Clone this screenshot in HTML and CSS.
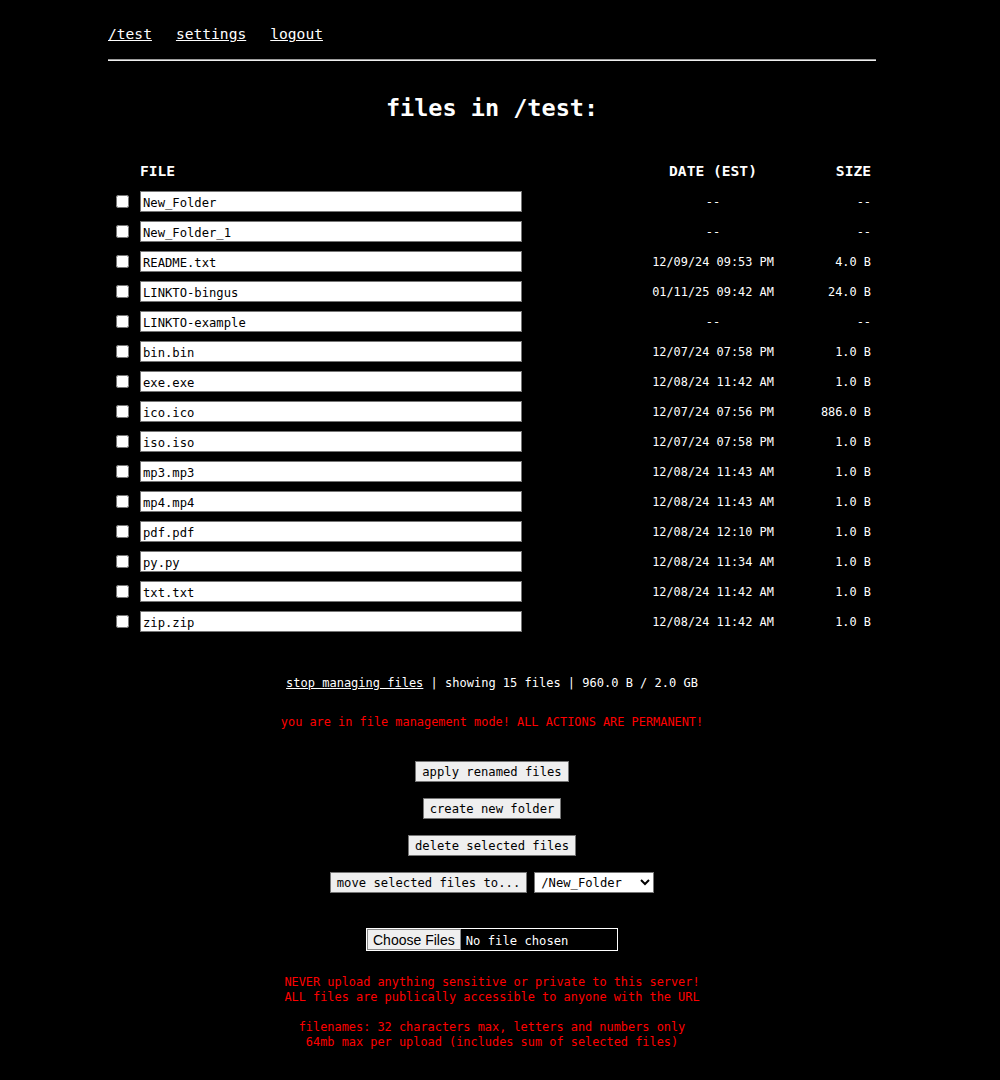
FILE: index.html
```html
<!DOCTYPE html>
<html>
<head>
<meta charset="utf-8">
<title>files in /test</title>
<link rel="stylesheet" href="styles.css">
</head>
<body>
<div class="page">
  <nav class="nav">
    <a href="#">/test</a>
    <a href="#">settings</a>
    <a href="#">logout</a>
  </nav>
  <hr class="rule">
  <h1 class="title">files in /test:</h1>

  <div class="files">
    <div class="row head">
      <span></span>
      <span class="c-file">FILE</span>
      <span class="c-date">DATE (EST)</span>
      <span class="c-size">SIZE</span>
    </div>
    <div class="row"><span><input type="checkbox" class="chk"></span><span class="c-file"><input class="name" type="text" value="New_Folder"></span><span class="c-date">--</span><span class="c-size">--</span></div>
    <div class="row"><span><input type="checkbox" class="chk"></span><span class="c-file"><input class="name" type="text" value="New_Folder_1"></span><span class="c-date">--</span><span class="c-size">--</span></div>
    <div class="row"><span><input type="checkbox" class="chk"></span><span class="c-file"><input class="name" type="text" value="README.txt"></span><span class="c-date">12/09/24 09:53 PM</span><span class="c-size">4.0 B</span></div>
    <div class="row"><span><input type="checkbox" class="chk"></span><span class="c-file"><input class="name" type="text" value="LINKTO-bingus"></span><span class="c-date">01/11/25 09:42 AM</span><span class="c-size">24.0 B</span></div>
    <div class="row"><span><input type="checkbox" class="chk"></span><span class="c-file"><input class="name" type="text" value="LINKTO-example"></span><span class="c-date">--</span><span class="c-size">--</span></div>
    <div class="row"><span><input type="checkbox" class="chk"></span><span class="c-file"><input class="name" type="text" value="bin.bin"></span><span class="c-date">12/07/24 07:58 PM</span><span class="c-size">1.0 B</span></div>
    <div class="row"><span><input type="checkbox" class="chk"></span><span class="c-file"><input class="name" type="text" value="exe.exe"></span><span class="c-date">12/08/24 11:42 AM</span><span class="c-size">1.0 B</span></div>
    <div class="row"><span><input type="checkbox" class="chk"></span><span class="c-file"><input class="name" type="text" value="ico.ico"></span><span class="c-date">12/07/24 07:56 PM</span><span class="c-size">886.0 B</span></div>
    <div class="row"><span><input type="checkbox" class="chk"></span><span class="c-file"><input class="name" type="text" value="iso.iso"></span><span class="c-date">12/07/24 07:58 PM</span><span class="c-size">1.0 B</span></div>
    <div class="row"><span><input type="checkbox" class="chk"></span><span class="c-file"><input class="name" type="text" value="mp3.mp3"></span><span class="c-date">12/08/24 11:43 AM</span><span class="c-size">1.0 B</span></div>
    <div class="row"><span><input type="checkbox" class="chk"></span><span class="c-file"><input class="name" type="text" value="mp4.mp4"></span><span class="c-date">12/08/24 11:43 AM</span><span class="c-size">1.0 B</span></div>
    <div class="row"><span><input type="checkbox" class="chk"></span><span class="c-file"><input class="name" type="text" value="pdf.pdf"></span><span class="c-date">12/08/24 12:10 PM</span><span class="c-size">1.0 B</span></div>
    <div class="row"><span><input type="checkbox" class="chk"></span><span class="c-file"><input class="name" type="text" value="py.py"></span><span class="c-date">12/08/24 11:34 AM</span><span class="c-size">1.0 B</span></div>
    <div class="row"><span><input type="checkbox" class="chk"></span><span class="c-file"><input class="name" type="text" value="txt.txt"></span><span class="c-date">12/08/24 11:42 AM</span><span class="c-size">1.0 B</span></div>
    <div class="row"><span><input type="checkbox" class="chk"></span><span class="c-file"><input class="name" type="text" value="zip.zip"></span><span class="c-date">12/08/24 11:42 AM</span><span class="c-size">1.0 B</span></div>
  </div>

  <p class="status"><a href="#">stop managing files</a> | showing 15 files | 960.0 B / 2.0 GB</p>
  <p class="warn mode">you are in file management mode! ALL ACTIONS ARE PERMANENT!</p>

  <div class="actions">
    <div class="act"><button class="btn">apply renamed files</button></div>
    <div class="act"><button class="btn">create new folder</button></div>
    <div class="act"><button class="btn">delete selected files</button></div>
    <div class="act move">
      <button class="btn">move selected files to...</button>
      <select class="dest"><option>/New_Folder</option></select>
    </div>
  </div>

  <div class="upload"><input type="file" class="picker" multiple></div>

  <p class="warn notes">NEVER upload anything sensitive or private to this server!<br>ALL files are publically accessible to anyone with the URL</p>
  <p class="warn notes second">filenames: 32 characters max, letters and numbers only<br>64mb max per upload (includes sum of selected files)</p>
</div>
</body>
</html>
```
FILE: styles.css
```css
html, body {
  margin: 0;
  padding: 0;
  background: #000;
  color: #fff;
}

body {
  font-family: "DejaVu Sans Mono", "Liberation Mono", monospace;
  font-size: 14.6px;
}

a {
  color: #fff;
}

.page {
  width: 768px;
  margin-left: 108px;
  padding-bottom: 20px;
}

.nav {
  display: flex;
  gap: 24px;
  padding-top: 24px;
  line-height: 20px;
  font-size: 14.6px;
}

.rule {
  margin: 15px 0 0 0;
  height: 0;
  border: 0;
  border-top: 1px solid #9a9a9a;
  border-bottom: 1px solid #eeeeee;
}

.title {
  margin: 32px 0 0 0;
  text-align: center;
  font-size: 23.5px;
  line-height: 30px;
  font-weight: bold;
}

.files {
  margin-top: 33px;
}

.row {
  display: grid;
  grid-template-columns: 32px 500px 146px 90px;
  height: 30px;
  align-items: center;
  font-size: 11.9px;
}

.row .c-date,
.row .c-size {
  padding-top: 2px;
}

.row.head {
  font-size: 14.6px;
  font-weight: bold;
}

.row.head .c-file,
.row.head .c-date,
.row.head .c-size {
  padding-top: 0;
  padding-bottom: 2px;
}

.c-date {
  text-align: center;
}

.c-size {
  text-align: right;
  padding-right: 5px;
}

.chk {
  display: block;
  width: 13px;
  height: 13px;
  margin: 0 0 0 8px;
}

.name {
  display: block;
  box-sizing: border-box;
  width: 382px;
  height: 21px;
  margin: 0;
  padding: 3px 2px 0 2px;
  border: 1px solid #767676;
  background: #fff;
  color: #000;
  font-family: "DejaVu Sans Mono", "Liberation Mono", monospace;
  font-size: 12.2px;
}

.status {
  margin: 39px 0 0 0;
  text-align: center;
  font-size: 12px;
  line-height: 16px;
}

.warn {
  color: #ff0000;
  text-align: center;
  font-size: 11.9px;
}

.mode {
  margin: 23px 0 0 0;
  line-height: 16px;
}

.actions {
  margin-top: 31px;
  display: flex;
  flex-direction: column;
  gap: 16px;
  align-items: center;
}

.act {
  display: flex;
  justify-content: center;
  gap: 7px;
}

.btn {
  box-sizing: border-box;
  height: 21px;
  margin: 0;
  padding: 1px 6px;
  border: 1px solid #767676;
  border-radius: 0;
  background: #efefef;
  color: #000;
  font-family: "DejaVu Sans Mono", "Liberation Mono", monospace;
  font-size: 12.2px;
}

.dest {
  box-sizing: border-box;
  width: 120px;
  height: 21px;
  margin: 0;
  padding: 0 2px;
  border: 1px solid #767676;
  border-radius: 0;
  background: #fff;
  color: #000;
  font-family: "DejaVu Sans Mono", "Liberation Mono", monospace;
  font-size: 12.2px;
}

.upload {
  margin-top: 35px;
  display: flex;
  justify-content: center;
}

.picker {
  box-sizing: border-box;
  width: 252px;
  height: 23px;
  margin: 0;
  padding: 0;
  border: 1px solid #fff;
  background: #000;
  color: #fff;
  font-family: "DejaVu Sans Mono", "Liberation Mono", monospace;
  font-size: 12.2px;
}

.picker::file-selector-button {
  height: 21px;
  margin: 0 5px 0 0;
  padding: 0 5px;
  border: 1px solid #8a8a8a;
  border-radius: 0;
  background: #efefef;
  color: #000;
  font-family: "Liberation Sans", Arial, sans-serif;
  font-size: 14px;
}

.notes {
  margin: 24px 0 0 0;
  line-height: 15px;
}

.notes.second {
  margin-top: 15px;
}
```
